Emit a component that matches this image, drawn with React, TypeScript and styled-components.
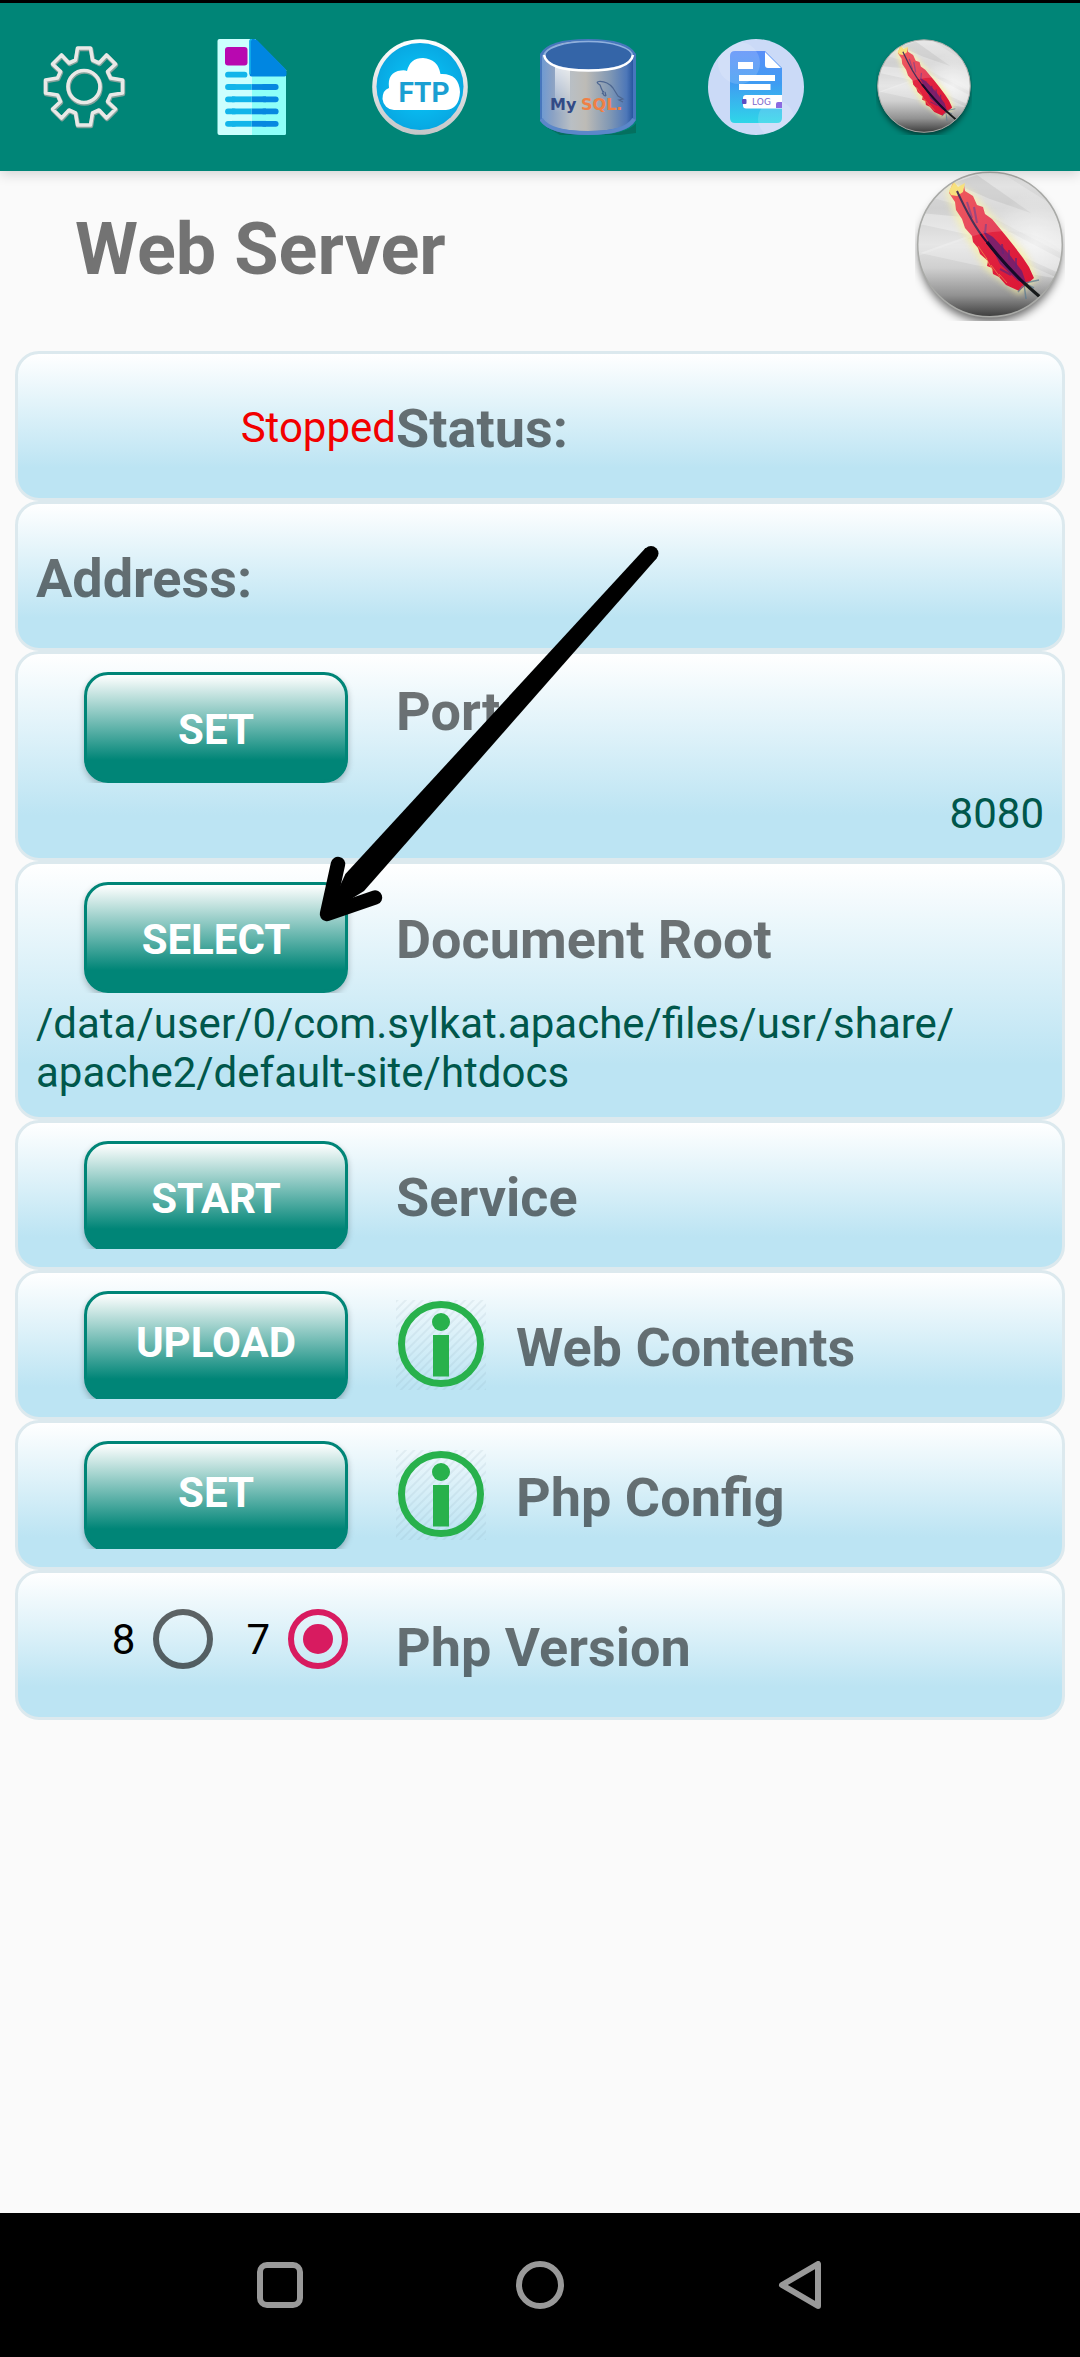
import React, { useId, useState } from "react";
import styled, { createGlobalStyle } from "styled-components";

const TEAL = "#008577";
const DARK_TEAL = "#00574b";

const GlobalStyle = createGlobalStyle`
  *, *::before, *::after { box-sizing: border-box; }
  body {
    margin: 0;
    background: #fafafa;
    font-family: Roboto, "Liberation Sans", sans-serif;
    font-size: 42px;
    line-height: 49px;
  }
`;

const Page = styled.div`
  display: flex;
  flex-direction: column;
  min-height: 100vh;
`;

const Toolbar = styled.header`
  position: relative;
  z-index: 1;
  display: flex;
  gap: 72px;
  padding: 36px;
  border-top: 3px solid #000;
  background: ${TEAL};
  box-shadow: 0 3px 12px rgba(0, 0, 0, 0.16);
`;

const IconButton = styled.button`
  display: block;
  padding: 0;
  border: 0;
  background: none;
  cursor: pointer;

  svg { display: block; }
`;

const Main = styled.main`
  flex: 1;
  padding: 0 15px;
`;

const Heading = styled.div`
  display: flex;
  align-items: flex-start;
  justify-content: space-between;
  height: 180px;
  padding-left: 60px;

  svg { display: block; }
`;

const Title = styled.h1`
  margin: 37px 0 0;
  color: rgba(0, 0, 0, 0.54);
  font-size: 72px;
  font-weight: 700;
  line-height: 84px;
`;

const Cards = styled.div`
  position: relative;
`;

const Card = styled.section`
  padding: 18px;
  border: 3px solid #dce9ee;
  border-radius: 24px;
  background: linear-gradient(#ffffff, #bce4f3 79%);
`;

const Row = styled.div<{ $tall?: boolean; $top?: boolean }>`
  display: flex;
  align-items: ${(p) => (p.$top ? "flex-start" : "center")};
  height: ${(p) => (p.$tall ? 111 : 108)}px;
`;

const Side = styled.div`
  display: flex;
  flex: 0 0 360px;
  align-items: center;
  justify-content: flex-end;
  height: 100%;
`;

const ActionSide = styled.div`
  flex: 0 0 360px;
  height: 100%;
  padding: 0 48px;
  overflow: hidden;
`;

const ActionButton = styled.button<{ $raised?: boolean }>`
  display: block;
  width: 100%;
  height: 111px;
  padding: ${(p) => (p.$raised ? "0 0 9px" : "3px 0 0")};
  border: 3px solid ${TEAL};
  border-radius: 24px;
  background: linear-gradient(#ffffff, ${TEAL} 81%);
  box-shadow: 0 3px 6px rgba(0, 0, 0, 0.25);
  color: #fff;
  font: 700 42px/49px Roboto, "Liberation Sans", sans-serif;
  text-transform: uppercase;
  cursor: pointer;
`;

const Label = styled.h2<{ $top?: boolean }>`
  margin: 0;
  padding-top: ${(p) => (p.$top ? 8 : 4)}px;
  color: rgba(0, 0, 0, 0.54);
  font-size: 54px;
  font-weight: 700;
  line-height: 63px;
`;

const StatusText = styled.span`
  padding-top: 2px;
  color: #f20000;
`;

const Value = styled.p<{ $end?: boolean }>`
  margin: 0;
  padding: 6px 0 2px;
  color: ${DARK_TEAL};
  text-align: ${(p) => (p.$end ? "right" : "left")};
`;

const InfoButton = styled(IconButton)`
  margin-right: 30px;
`;

const RadioGroup = styled.div`
  display: flex;
  flex: 0 0 360px;
  gap: 33px;
  justify-content: flex-end;
  padding: 0 48px 12px;
`;

const RadioLabel = styled.label`
  display: flex;
  align-items: center;
  gap: 18px;
  color: #000;
`;

const Radio = styled.input`
  appearance: none;
  width: 60px;
  height: 60px;
  margin: 0;
  border: 6px solid rgba(0, 0, 0, 0.6);
  border-radius: 50%;
  cursor: pointer;

  &:checked {
    padding: 9px;
    border-color: #d81b60;
    background: #d81b60 content-box;
  }
`;

const ArrowOverlay = styled.svg`
  position: absolute;
  top: 190px;
  left: 300px;
  pointer-events: none;
`;

const NavBar = styled.nav`
  display: flex;
  height: 144px;
  padding: 0 150px;
  background: #000;
`;

const NavButton = styled(IconButton)`
  display: flex;
  flex: 1;
  align-items: center;
  justify-content: center;
`;

const quarter = [
  [6.5, -38.5], [8.5, -26.5], [15, -23.5], [22.5, -31.5],
  [31.5, -22.5], [23.5, -15], [26.5, -8.5], [38.5, -6.5],
];

const gearPoints = [0, 1, 2, 3]
  .flatMap((turns) =>
    quarter.map(([x, y]) => {
      let p = [x, y];
      for (let i = 0; i < turns; i++) p = [-p[1], p[0]];
      return `${p[0] + 48},${p[1] + 47.5}`;
    })
  )
  .join(" ");

function GearIcon() {
  return (
    <svg width="96" height="96" viewBox="0 0 96 96" fill="none" strokeLinejoin="round">
      <g stroke="#86a39d" strokeWidth="4.500" transform="translate(0.5 1)">
        <polygon points={gearPoints} />
        <circle cx="48" cy="47.5" r="16" />
      </g>
      <g stroke="#e9e9e7" strokeWidth="3.600">
        <polygon points={gearPoints} />
        <circle cx="48" cy="47.5" r="16" />
      </g>
    </svg>
  );
}

function PageIcon() {
  const lines = [48, 60.3, 72.4, 84.8];
  return (
    <svg width="96" height="96" viewBox="0 0 96 96">
      <path d="M15.5 0H51L82 31.5V94a2 2 0 0 1-2 2H15.500a2 2 0 0 1-2-2V2a2 2 0 0 1 2-2Z" fill="#ccfffe" />
      <path d="M48 0H51L82 31.500V94a2 2 0 0 1-2 2H48Z" fill="#8efff8" />
      <path d="M47.500 0H50Q52 0 53.500 1.500L81 29.500Q82.500 31 82.500 33V35.500Q82.500 37.500 80.500 37.500H47.500Q45.500 37.500 45.500 35.500V2Q45.500 0 47.500 0Z" fill="#0086e1" />
      <path d="M48 0.500Q46 0.500 46 2V35" fill="none" stroke="#12b2ea" strokeWidth="1.500" />
      <rect x="21" y="8" width="22.500" height="18.500" rx="3" fill="#b808b0" />
      <g strokeWidth="5.800" strokeLinecap="round">
        <path d="M24 35.700H40.500" stroke="#12b5ea" />
        {lines.map((y) => (
          <g key={y}>
            <path d={`M60 ${y}H71.700`} stroke="#0688e0" />
            <path d={`M47.700 ${y}H62`} stroke="#0688e0" strokeLinecap="butt" />
            <path d={`M24 ${y}H30`} stroke="#12b5ea" />
            <path d={`M28 ${y}H47.700`} stroke="#12b5ea" strokeLinecap="butt" />
          </g>
        ))}
      </g>
    </svg>
  );
}

function FtpIcon() {
  return (
    <svg width="96" height="96" viewBox="0 0 96 96">
      <defs>
        <linearGradient id="ftp-ring" x1="0" y1="0" x2="0" y2="1">
          <stop offset="0" stopColor="#ffffff" />
          <stop offset="1" stopColor="#c4c6c8" />
        </linearGradient>
        <radialGradient id="ftp-sky">
          <stop offset="0.4" stopColor="#08bdf2" />
          <stop offset="1" stopColor="#08a8e2" />
        </radialGradient>
      </defs>
      <circle cx="48" cy="48" r="47.800" fill="url(#ftp-ring)" />
      <circle cx="48" cy="47.500" r="43.500" fill="url(#ftp-sky)" />
      <path
        d="M22 71A12 12 0 0 1 10.500 60Q10.500 51 17 49Q15 33 29 31.500Q33 31 35 32Q38 19 51 19Q66 20 68.500 35Q87 34 88 53Q87 70 74 71Z"
        fill="#fff"
      />
      <text x="52" y="63" textAnchor="middle" fontFamily="Roboto, sans-serif" fontSize="28" fontWeight="700" fill="#1b9fd2">
        FTP
      </text>
    </svg>
  );
}

function MySqlIcon() {
  return (
    <svg width="96" height="96" viewBox="0 0 96 96">
      <defs>
        <linearGradient id="db-body">
          <stop offset="0" stopColor="#6f9ad2" />
          <stop offset="0.120" stopColor="#8ba2c4" />
          <stop offset="0.320" stopColor="#b9bfc4" />
          <stop offset="0.480" stopColor="#bdbbb6" />
          <stop offset="0.750" stopColor="#7f97b4" />
          <stop offset="0.930" stopColor="#4d77b8" />
          <stop offset="1" stopColor="#2856a0" />
        </linearGradient>
        <linearGradient id="db-shine" x1="0" y1="0" x2="0" y2="1">
          <stop offset="0" stopColor="#fff" stopOpacity="0.700" />
          <stop offset="1" stopColor="#fff" stopOpacity="0" />
        </linearGradient>
      </defs>
      <path d="M6 88Q26 98 70 95Q90 92 96 84V94L80 96H20Z" fill="#04705f" />
      <path d="M0 15Q8 0 48 0Q88 0 96 15V81Q88 96 48 96Q8 96 0 81Z" fill="#4777bd" />
      <path d="M2 17Q8 2 48 2Q86 2 93 17V80Q86 92 48 92Q8 92 2 80Z" fill="url(#db-body)" />
      <path d="M1 80Q10 94 48 94Q86 94 94 80" fill="none" stroke="#5b87c9" strokeWidth="4" />
      <rect x="15" y="28" width="15" height="46" fill="url(#db-shine)" />
      <ellipse cx="48.500" cy="17" rx="44" ry="14.500" fill="#3465a8" stroke="#8fb0de" strokeWidth="1.500" />
      <path d="M4 16Q7 31.500 48.500 31.500Q90 31.500 93 16" fill="none" stroke="#fff" strokeWidth="2.500" />
      <path
        d="M66 57Q63 57 63 53Q61 49 60 46Q55 43 59 42.500Q67 42 73 49L78 57L83 60L79 61L83 63M64 52L62 55M66 57L65 53"
        fill="none"
        stroke="#4d6690"
        strokeWidth="1.200"
      />
      <text x="10" y="71" fontFamily="DejaVu Sans, sans-serif" fontSize="16" fontWeight="700" fill="#324a86">
        My<tspan x="41" fill="#f08045">SQL.</tspan>
      </text>
    </svg>
  );
}

function LogIcon() {
  return (
    <svg width="96" height="96" viewBox="0 0 96 96">
      <defs>
        <linearGradient id="log-doc" x1="0" y1="0" x2="0" y2="1">
          <stop offset="0" stopColor="#5b8ff8" />
          <stop offset="0.450" stopColor="#3f9cf2" />
          <stop offset="1" stopColor="#2fd6e8" />
        </linearGradient>
        <clipPath id="log-clip">
          <circle cx="48" cy="48" r="48" />
        </clipPath>
      </defs>
      <circle cx="48" cy="48" r="48" fill="#cbdaf7" />
      <path d="M27 12H57L74 29V79Q74 84 69 84H27Q22 84 22 79V17Q22 12 27 12Z" fill="url(#log-doc)" />
      <g clipPath="url(#log-clip)" fill="#fff" fillOpacity="0.150">
        <circle cx="31" cy="24" r="21" />
        <circle cx="68" cy="80" r="18" />
      </g>
      <path d="M57 13V26Q57 29 60 29H73Z" fill="#fff" />
      <rect x="30" y="23" width="15" height="7" fill="#fff" />
      <rect x="31" y="36" width="36" height="6" fill="#fff" />
      <rect x="31" y="45" width="31.500" height="6" fill="#fff" />
      <path d="M38 56H74V69.500H38Q35 69.500 35 66.500V59Q35 56 38 56Z" fill="#fff" />
      <rect x="34" y="60" width="4.500" height="5" rx="1" fill="#5b4fc4" />
      <path d="M68 69V65Q68 63 70 63H74V69Z" fill="#8b6be0" />
      <text x="53.500" y="66" textAnchor="middle" fontFamily="DejaVu Sans, sans-serif" fontSize="9" fill="#7b68cc">
        LOG
      </text>
    </svg>
  );
}

function ApacheIcon({ size }: { size: number }) {
  const id = useId();
  const ref = (name: string) => `url(#${id}${name})`;
  return (
    <svg width={size} height={size} viewBox="0 0 150 150">
      <defs>
        <linearGradient id={`${id}ball`} x1="0" y1="0" x2="0" y2="1">
          <stop offset="0" stopColor="#dedede" />
          <stop offset="0.250" stopColor="#c8c8c8" />
          <stop offset="0.500" stopColor="#e2e2e2" />
          <stop offset="0.660" stopColor="#d0d0d0" />
          <stop offset="0.850" stopColor="#929292" />
          <stop offset="1" stopColor="#3c3c3c" />
        </linearGradient>
        <radialGradient id={`${id}light`}>
          <stop offset="0" stopColor="#fff" stopOpacity="0.500" />
          <stop offset="1" stopColor="#fff" stopOpacity="0" />
        </radialGradient>
        <linearGradient id={`${id}red`} x1="0" y1="0" x2="0.800" y2="1">
          <stop offset="0" stopColor="#f3bd62" />
          <stop offset="0.100" stopColor="#ec3c40" />
          <stop offset="0.450" stopColor="#e22742" />
          <stop offset="1" stopColor="#dc1737" />
        </linearGradient>
        <clipPath id={`${id}clip`}>
          <circle cx="75" cy="73.500" r="72" />
        </clipPath>
        <filter id={`${id}shadow`} x="-30%" y="-30%" width="160%" height="160%">
          <feGaussianBlur stdDeviation="5" />
        </filter>
        <filter id={`${id}glow`} x="-30%" y="-30%" width="160%" height="160%">
          <feGaussianBlur stdDeviation="3" />
        </filter>
      </defs>
      <circle cx="75" cy="80" r="71" fill="#000" fillOpacity="0.600" filter={ref("shadow")} />
      <circle cx="75" cy="73.500" r="72.500" fill={ref("ball")} />
      <g clipPath={ref("clip")}>
        <path d="M0 22L65 40L150 84V42L90 4L40 0Z" fill="#fff" fillOpacity="0.220" />
        <path d="M62 4L116 42L75 28L38 12Z" fill="#999" fillOpacity="0.260" />
        <path d="M0 52L65 66L150 105V90L70 48L5 42Z" fill="#fff" fillOpacity="0.320" />
        <path d="M5 82L50 66L145 108L60 94Z" fill="#fff" fillOpacity="0.260" />
        <ellipse cx="120" cy="72" rx="42" ry="52" fill={ref("light")} />
        <path
          d="M38 12L58 24L110 84L121 107L104 122L72 98L44 52L32 22Z"
          fill="#f8f0a0"
          stroke="#f8f0a0"
          strokeWidth="3"
          opacity="0.700"
          filter={ref("glow")}
        />
        <path
          d="M34 22L38 11L43 17L49 14L50 20L58 25L62 34L68 36L70 43L77 48L91 65L99 75L108 87L114 96L119 107L111 114L104 120L91 114L84 106L78 103L77 97L72 95L73 90L65 83L63 77L58 71L57 65L50 57L47 48L41 39L40 31Z"
          fill={ref("red")}
        />
        <path d="M34 20L39 11L43 16L50 12L48 21L42 25L36 24Z" fill="#f6dc67" />
        <path
          d="M63 75L72 88M71 87L78 100M76 94L85 106M84 103L92 112"
          fill="none"
          stroke="#f3a04e"
          strokeOpacity="0.600"
        />
        <path d="M68 60L78 66L94 83L107 100L111 112L103 110L85 93Z" fill="#56207e" fillOpacity="0.700" />
        <path
          d="M57 47L52 31M62 52L59 36M70 63L71 53M88 83L87 73M94 90L94 79M101 98L101 87M96 104L85 98"
          stroke="#672477"
          strokeOpacity="0.700"
          strokeWidth="2"
          fill="none"
        />
        <path d="M42 20Q57 53 71 70Q89 94 110 113" fill="none" stroke="#29103c" strokeWidth="2" />
        <path d="M72 71Q91 95 109 112" fill="none" stroke="#160b28" strokeWidth="3" />
        <path d="M110 112L124 109M111 113L119 117M109 113L111 128M108 115L103 121M113 115L119 122" stroke="#607e91" strokeOpacity="0.800" strokeWidth="1.500" />
        <path d="M109 112L125 126" stroke="#17191a" strokeWidth="3" />
        <path d="M0 86L48 69Q64 61 90 60Q125 60 150 83V0H0Z" fill="#fff" fillOpacity="0.150" />
      </g>
      <circle cx="75" cy="73.500" r="72.300" fill="none" stroke="#a9aaa7" strokeWidth="1.500" />
    </svg>
  );
}

function InfoIcon() {
  const id = useId();
  return (
    <svg width="90" height="90" viewBox="0 0 90 90">
      <defs>
        <pattern id={id} width="6" height="6" patternUnits="userSpaceOnUse" patternTransform="rotate(45)">
          <rect width="2" height="6" fill="#6a8f9d" fillOpacity="0.100" />
        </pattern>
      </defs>
      <rect width="90" height="90" fill={`url(#${id})`} />
      <circle cx="45" cy="44" r="39.500" fill="none" stroke="#28b14c" strokeWidth="7" />
      <circle cx="45" cy="22" r="9" fill="#28b14c" />
      <rect x="37" y="35" width="16" height="41.500" fill="#28b14c" />
    </svg>
  );
}

function PointerArrow() {
  return (
    <ArrowOverlay width="350" height="390" viewBox="315 541 350 390" aria-hidden="true">
      <circle cx="651" cy="553.500" r="7.500" />
      <path d="M645.500 548L656.500 558.500L364 891L327 914L345.400 874Z" />
      <path d="M338 864L327 914L375 897.500" fill="none" stroke="#000" strokeWidth="14.500" strokeLinecap="round" strokeLinejoin="round" />
    </ArrowOverlay>
  );
}

const tools = [
  { name: "Settings", icon: <GearIcon /> },
  { name: "Pages", icon: <PageIcon /> },
  { name: "FTP server", icon: <FtpIcon /> },
  { name: "MySQL server", icon: <MySqlIcon /> },
  { name: "Logs", icon: <LogIcon /> },
  { name: "Apache server", icon: <ApacheIcon size={96} /> },
];

export default function App() {
  const [php, setPhp] = useState("7");

  return (
    <Page>
      <GlobalStyle />
      <Toolbar>
        {tools.map((tool) => (
          <IconButton key={tool.name} type="button" aria-label={tool.name}>
            {tool.icon}
          </IconButton>
        ))}
      </Toolbar>

      <Main>
        <Heading>
          <Title>Web Server</Title>
          <ApacheIcon size={150} />
        </Heading>

        <Cards>
          <Card>
            <Row>
              <Side>
                <StatusText>Stopped</StatusText>
              </Side>
              <Label>Status:</Label>
            </Row>
          </Card>

          <Card>
            <Row>
              <Label>Address:</Label>
            </Row>
          </Card>

          <Card>
            <Row $tall $top>
              <ActionSide>
                <ActionButton type="button">Set</ActionButton>
              </ActionSide>
              <Label $top>Port</Label>
            </Row>
            <Value $end>8080</Value>
          </Card>

          <Card>
            <Row $tall>
              <ActionSide>
                <ActionButton type="button">Select</ActionButton>
              </ActionSide>
              <Label>Document Root</Label>
            </Row>
            <Value>
              /data/user/0/com.sylkat.apache/files/usr/share/
              <wbr />
              apache2/default-site/htdocs
            </Value>
          </Card>

          <Card>
            <Row>
              <ActionSide>
                <ActionButton type="button">Start</ActionButton>
              </ActionSide>
              <Label>Service</Label>
            </Row>
          </Card>

          <Card>
            <Row>
              <ActionSide>
                <ActionButton type="button" $raised>Upload</ActionButton>
              </ActionSide>
              <InfoButton type="button" aria-label="About web contents">
                <InfoIcon />
              </InfoButton>
              <Label>Web Contents</Label>
            </Row>
          </Card>

          <Card>
            <Row>
              <ActionSide>
                <ActionButton type="button" $raised>Set</ActionButton>
              </ActionSide>
              <InfoButton type="button" aria-label="About PHP config">
                <InfoIcon />
              </InfoButton>
              <Label>Php Config</Label>
            </Row>
          </Card>

          <Card>
            <Row>
              <RadioGroup role="radiogroup" aria-labelledby="php-version">
                {["8", "7"].map((version) => (
                  <RadioLabel key={version}>
                    {version}
                    <Radio
                      type="radio"
                      name="php"
                      value={version}
                      checked={php === version}
                      onChange={() => setPhp(version)}
                    />
                  </RadioLabel>
                ))}
              </RadioGroup>
              <Label id="php-version">Php Version</Label>
            </Row>
          </Card>

          <PointerArrow />
        </Cards>
      </Main>

      <NavBar>
        <NavButton type="button" aria-label="Recent apps">
          <svg width="48" height="48" viewBox="0 0 48 48" fill="none" stroke="#999" strokeWidth="6">
            <rect x="4" y="4" width="40" height="40" rx="7" />
          </svg>
        </NavButton>
        <NavButton type="button" aria-label="Home">
          <svg width="48" height="48" viewBox="0 0 48 48" fill="none" stroke="#999" strokeWidth="6">
            <circle cx="24" cy="24" r="21" />
          </svg>
        </NavButton>
        <NavButton type="button" aria-label="Back">
          <svg width="48" height="48" viewBox="0 0 48 48" fill="none" stroke="#999" strokeWidth="6" strokeLinejoin="round">
            <path d="M42 3V45L6 24Z" />
          </svg>
        </NavButton>
      </NavBar>
    </Page>
  );
}
